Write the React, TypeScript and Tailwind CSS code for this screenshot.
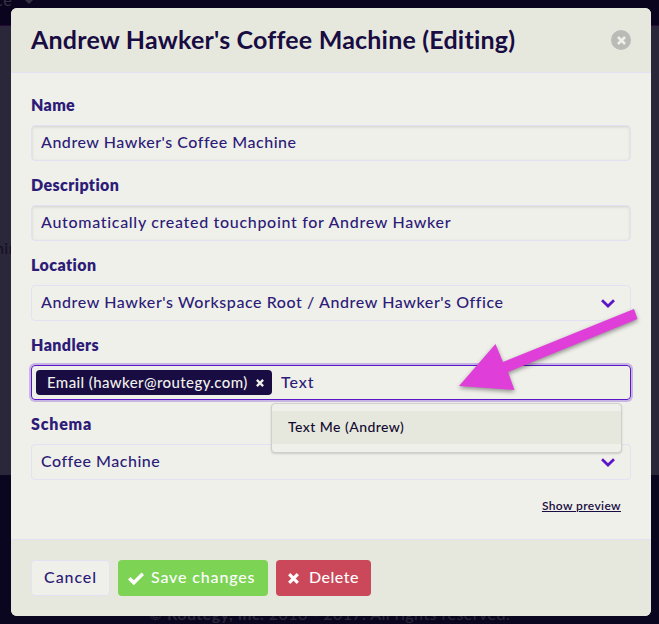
import type { ReactNode } from "react";

function Backdrop() {
  return (
    <div className="flex h-[624px] w-full flex-col overflow-hidden">
      <div className="flex h-[26px] shrink-0 gap-[10px] border-b border-[#25083a] bg-[#0a041e] text-base leading-none text-[#343043]">
        <span className="-mt-[8px] -ml-[5px] tracking-[0.8px]">ce</span>
        <svg className="-mt-[5px] h-[10px] w-[12px]" viewBox="0 0 12 10" fill="none" stroke="currentColor" strokeWidth="3">
          <path d="M1 2l5 5 5-5" />
        </svg>
      </div>
      <div className="h-[449px] shrink-0 bg-[#2b273a] pt-[210px] text-base text-[#151024]">
        <span className="-ml-[5px] leading-5 tracking-[0.4px]">hine</span>
      </div>
      <div className="flex flex-1 items-end justify-center bg-[#0b061f] text-base leading-5 text-[#292538]">
        <p className="whitespace-pre tracking-[0.45px]">
          © <b>Routegy, Inc.</b> 2016 - 2017. All rights reserved.
        </p>
      </div>
    </div>
  );
}

function Chevron() {
  return (
    <svg className="mt-[2px] h-[9px] w-[14px] shrink-0" viewBox="0 0 14 9" fill="none" stroke="#5b16c6" strokeWidth="2.7">
      <path d="M1 1.2l6 5.8 6-5.8" />
    </svg>
  );
}

function Cross({ className }: { className: string }) {
  return (
    <svg className={className} viewBox="0 0 12 12" fill="none" stroke="currentColor" strokeWidth="3.4">
      <path d="M1.3 1.3l9.4 9.4M10.7 1.3l-9.4 9.4" />
    </svg>
  );
}

function Field({ label, labelClass, children }: { label: string; labelClass: string; children: ReactNode }) {
  return (
    <div className="flex flex-col">
      <div className={`mb-[9px] h-[23px] pt-px text-base leading-[22px] font-extrabold whitespace-nowrap ${labelClass}`}>
        <span>{label}</span>
      </div>
      {children}
    </div>
  );
}

const box = "flex h-9 items-center rounded border border-[#e4e1f5] px-[9px] pb-[2px] text-base whitespace-nowrap";

export default function App() {
  return (
    <div className="relative h-[624px] w-full overflow-hidden font-['Lato',sans-serif] font-medium text-[#2d1b78]">
      <Backdrop />
      <div className="absolute top-[8px] left-[11px] flex h-[608px] w-[640px] flex-col overflow-hidden rounded-md bg-[#eff0ea]">
        <header className="flex h-[65px] shrink-0 items-center justify-between border-b border-[#e4e1f5] bg-[#e6e8de] px-5">
          <h1 className="pb-[2px] text-[25px] leading-8 font-bold tracking-[0.2px] whitespace-nowrap text-[#180c42]">
            Andrew Hawker's Coffee Machine (Editing)
          </h1>
          <button className="flex size-5 items-center justify-center rounded-full bg-[#babab7] text-[#eff0ea]">
            <Cross className="size-[9px]" />
          </button>
        </header>

        <main className="flex h-[466px] shrink-0 flex-col gap-[12px] px-5 pt-[20px]">
          <Field label="Name" labelClass="tracking-[0.3px]">
            <div className={`${box} tracking-[0.52px] shadow-[inset_0_1px_3px_rgba(0,0,0,0.12)]`}>
              <span>Andrew Hawker's Coffee Machine</span>
            </div>
          </Field>
          <Field label="Description" labelClass="tracking-[0.4px]">
            <div className={`${box} tracking-[0.69px] shadow-[inset_0_1px_3px_rgba(0,0,0,0.12)]`}>
              <span>Automatically created touchpoint for Andrew Hawker</span>
            </div>
          </Field>
          <Field label="Location" labelClass="tracking-[0.4px]">
            <div className={`${box} justify-between pr-[15px] tracking-[0.58px]`}>
              <span>Andrew Hawker's Workspace Root / Andrew Hawker's Office</span>
              <Chevron />
            </div>
          </Field>
          <Field label="Handlers" labelClass="tracking-[0.4px]">
            <div className="relative flex h-[35px] items-center gap-[9px] rounded border border-[#5b16c6] px-1 whitespace-nowrap shadow-[0_0_0_2px_#c7b5e3]">
              <div className="flex h-[25px] w-[236px] items-center justify-between rounded bg-[#180c42] pr-[8px] pl-[11px] text-[15px] text-[#eff0ea]">
                <span className="pb-px tracking-[0.4px]">Email (hawker@routegy.com)</span>
                <Cross className="size-[8px]" />
              </div>
              <span className="pb-[2px] tracking-[0.9px]">Text</span>
              <div className="absolute top-[37px] left-[239px] z-10 h-[50px] w-[351px] rounded border border-[#cfcfcb] bg-[#eff0ea] py-[7px] shadow-[0_1px_2px_rgba(0,0,0,0.15)]">
                <div className="flex h-[33px] items-center bg-[#e6e8de] px-4 pb-px text-sm tracking-[0.45px] text-[#120a30]">
                  <span>Text Me (Andrew)</span>
                </div>
              </div>
            </div>
          </Field>
          <Field label="Schema" labelClass="tracking-[0.8px]">
            <div className={`${box} justify-between pr-[15px] tracking-[0.52px]`}>
              <span>Coffee Machine</span>
              <Chevron />
            </div>
          </Field>
          <a className="mt-[4px] mr-[10px] self-end text-xs leading-5 font-semibold tracking-[0.38px] text-[#180c42] underline">Show preview</a>
        </main>

        <footer className="flex flex-1 gap-2 border-t border-[#e4e1f5] bg-[#e6e8de] px-5 pt-5 text-base whitespace-nowrap">
          <button className="flex h-9 w-[79px] items-center justify-center rounded border border-[#e4e1f5] bg-[#eff0ea] tracking-[0.9px]">
            <span className="pb-[2px]">Cancel</span>
          </button>
          <button className="flex h-9 w-[150px] items-center gap-[7px] rounded bg-[#7dd353] pl-[10px] tracking-[0.85px] text-white">
            <svg className="h-[13px] w-4" viewBox="0 0 16 13" fill="none" stroke="currentColor" strokeWidth="3.5">
              <path d="M1.2 6.2l4.6 4.6 9-9" />
            </svg>
            <span className="pb-[2px]">Save changes</span>
          </button>
          <button className="flex h-9 w-[95px] items-center gap-[10px] rounded bg-[#ca4859] pl-[12px] tracking-[0.5px] text-white">
            <Cross className="size-[11px]" />
            <span className="pb-[2px]">Delete</span>
          </button>
        </footer>
      </div>

      <svg className="absolute top-[305px] left-[450px] z-20 h-[100px] w-[195px] drop-shadow-[0_2px_2px_rgba(0,0,0,0.4)]" viewBox="450 305 195 100">
        <path d="M459 386L495.500 344L503 362L634 309L637.500 319L508 372L514.500 390Z" fill="#df3fd8" />
      </svg>
    </div>
  );
}
